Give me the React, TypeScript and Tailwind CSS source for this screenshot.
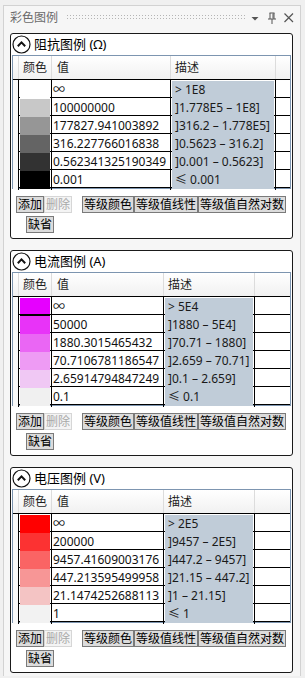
import React from "react";

type Row = { swatch: string; value: string; desc: string; mark?: boolean };
type Legend = { title: string; cols: string; rows: Row[] };

const legends: Legend[] = [
  {
    title: "阻抗图例 (Ω)",
    cols: "grid-cols-[6px_33px_119px_105px_1fr]",
    rows: [
      { swatch: "bg-white", value: "∞", desc: "> 1E8" },
      { swatch: "bg-[#c8c8c8]", value: "100000000", desc: "]1.778E5 – 1E8]" },
      { swatch: "bg-[#969696]", value: "177827.941003892", desc: "]316.2 – 1.778E5]" },
      { swatch: "bg-[#646464]", value: "316.227766016838", desc: "]0.5623 – 316.2]" },
      { swatch: "bg-[#323232]", value: "0.562341325190349", desc: "]0.001 – 0.5623]" },
      { swatch: "bg-[#000000]", value: "0.001", desc: "≤ 0.001" },
    ],
  },
  {
    title: "电流图例 (A)",
    cols: "grid-cols-[6px_33px_112px_91px_1fr]",
    rows: [
      { swatch: "bg-[#e600ff]", value: "∞", desc: "> 5E4", mark: true },
      { swatch: "bg-[#e833f8]", value: "50000", desc: "]1880 – 5E4]" },
      { swatch: "bg-[#ea66f4]", value: "1880.3015465432", desc: "]70.71 – 1880]" },
      { swatch: "bg-[#ee9bf4]", value: "70.7106781186547", desc: "]2.659 – 70.71]" },
      { swatch: "bg-[#f0c8f4]", value: "2.65914794847249", desc: "]0.1 – 2.659]" },
      { swatch: "bg-[#f0f0f0]", value: "0.1", desc: "≤ 0.1" },
    ],
  },
  {
    title: "电压图例 (V)",
    cols: "grid-cols-[6px_33px_112px_91px_1fr]",
    rows: [
      { swatch: "bg-[#ff0000]", value: "∞", desc: "> 2E5" },
      { swatch: "bg-[#fc3232]", value: "200000", desc: "]9457 – 2E5]" },
      { swatch: "bg-[#fa6464]", value: "9457.41609003176", desc: "]447.2 – 9457]" },
      { swatch: "bg-[#f79696]", value: "447.213595499958", desc: "]21.15 – 447.2]" },
      { swatch: "bg-[#f4c4c4]", value: "21.1474252688113", desc: "]1 – 21.15]" },
      { swatch: "bg-[#f2f2f2]", value: "1", desc: "≤ 1" },
    ],
  },
];

function CollapseIcon() {
  return (
    <svg width="19" height="19" viewBox="0 0 19 19" className="shrink-0">
      <circle cx="9.5" cy="9.5" r="8.5" fill="white" stroke="#111" strokeWidth="1.2" />
      <path d="M5.8 11.2 L9.5 7.4 L13.2 11.2" fill="none" stroke="#111" strokeWidth="2" />
    </svg>
  );
}

function Btn({ label, disabled, className = "" }: { label: string; disabled?: boolean; className?: string }) {
  return (
    <div
      className={
        "flex h-[17px] items-center px-[1px] text-[12px] leading-none " +
        (disabled
          ? "border border-[#d6d6d6] bg-[#f4f4f4] text-[#a9a9a9] "
          : "border border-[#7a7a7a] bg-[#dcdcdc] text-black ") +
        className
      }
    >
      {label}
    </div>
  );
}

function LegendPanel({ legend }: { legend: Legend }) {
  return (
    <div className="w-[283px] rounded-[3px] border border-[#1a1a1a] bg-white">
      <div className="flex h-[21px] items-center gap-[3px] pl-[1px]">
        <CollapseIcon />
        <span className="text-[13px] text-black">{legend.title}</span>
      </div>
      <div className="mx-[1px] border border-[#7d95b0] bg-white">
        <div className={"grid h-[24px] bg-gradient-to-b from-white to-[#f1f1f1] border-b border-black " + legend.cols}>
          <div className="border-r border-[#dcdcdc]" />
          <div className="flex items-center border-r border-[#dcdcdc] pl-[4px] text-[12px] text-[#1e1e1e]">颜色</div>
          <div className="flex items-center border-r border-[#dcdcdc] pl-[5px] text-[12px] text-[#1e1e1e]">值</div>
          <div className="flex items-center border-r border-[#dcdcdc] pl-[4px] text-[12px] text-[#1e1e1e]">描述</div>
          <div />
        </div>
        {legend.rows.map((r, i) => (
          <div key={i} className={"grid h-[18px] border-b border-black " + legend.cols}>
            <div className="border-r border-black bg-[#fafafa]" />
            <div className="border-r border-black p-[1px]">
              <div className={"h-full w-full " + r.swatch + (r.mark ? " border-b-2 border-black" : "")} />
            </div>
            <div className="flex items-center overflow-hidden whitespace-nowrap border-r border-black pl-[1px] text-[12px] text-[#111]">
              {r.value}
            </div>
            <div className="border-r border-black p-[1px]">
              <div className="flex h-full items-center whitespace-nowrap bg-[#c0ccd8] pl-[3px] text-[12px] text-[#1a1a1a]">
                {r.desc}
              </div>
            </div>
            <div />
          </div>
        ))}
      </div>
      <div className="flex flex-col gap-[3px] pb-[5px] pt-[7px]">
        <div className="flex pl-[5px]">
          <Btn label="添加" />
          <Btn label="删除" disabled />
          <Btn label="等级颜色" className="ml-[10px]" />
          <Btn label="等级值线性" />
          <Btn label="等级值自然对数" />
        </div>
        <div className="flex pl-[15px]">
          <Btn label="缺省" />
        </div>
      </div>
    </div>
  );
}

export default function App() {
  return (
    <div className="h-[678px] w-[305px] overflow-hidden bg-[#f0f0f0] pl-[3px] pt-[5px] font-['Noto_Sans','Noto_Sans_CJK_SC',sans-serif]">
      <div className="h-[671px] w-[298px] border-l border-t border-r border-[#d2d2d2] bg-[#f6f6f6]">
        <div className="flex h-[23px] items-center pl-[6px] pr-[4px]">
          <span className="text-[12px] text-[#6a6a6a]">彩色图例</span>
          <svg className="ml-[9px] h-[6px] flex-1" preserveAspectRatio="none">
            <defs>
              <pattern id="grip" width="3" height="3" patternUnits="userSpaceOnUse">
                <rect x="0" y="0" width="1" height="1" fill="#b5b5b5" />
              </pattern>
            </defs>
            <rect x="0" y="0" width="100%" height="6" fill="url(#grip)" />
          </svg>
          <svg width="12" height="12" viewBox="0 0 12 12" className="ml-[4px]">
            <path d="M2.5 5 H9.5 L6 8.5 Z" fill="#555" />
          </svg>
          <svg width="14" height="14" viewBox="0 0 14 14" className="ml-[4px]">
            <path d="M4.5 2 H9.5 M5 2 V8 M9 2 V8 M3 8 H11 M7 8 V13 M8 2.5 V7.5" fill="none" stroke="#555" strokeWidth="1" />
          </svg>
          <svg width="14" height="14" viewBox="0 0 14 14" className="ml-[3px]">
            <path d="M2.5 2.5 L11 11 M11 2.5 L2.5 11" fill="none" stroke="#555" strokeWidth="1.2" />
          </svg>
        </div>
        <div className="flex flex-col gap-[11px] pl-[6px] pt-[4px]">
          {legends.map((l) => (
            <LegendPanel key={l.title} legend={l} />
          ))}
        </div>
      </div>
    </div>
  );
}
